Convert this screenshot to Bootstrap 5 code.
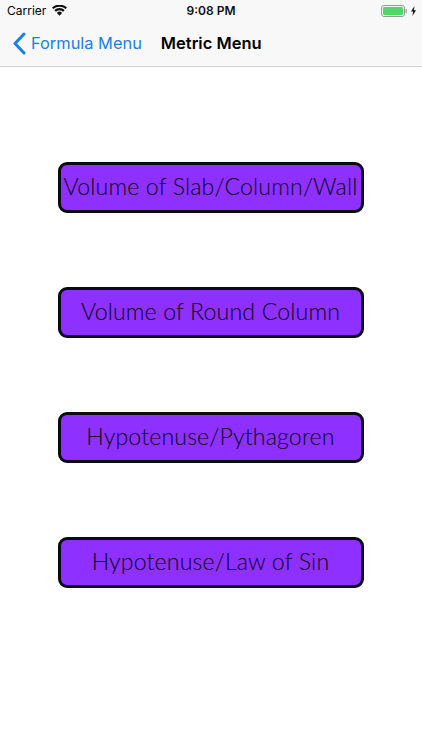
<!DOCTYPE html>
<html lang="en">
<head>
<meta charset="utf-8">
<title>Metric Menu</title>
<link href="https://cdn.jsdelivr.net/npm/bootstrap@5.3.0/dist/css/bootstrap.min.css" rel="stylesheet">
<style>
html,body{height:750px;overflow:hidden;background:#fff}
body{font-family:Inter,"Liberation Sans",Arial,sans-serif;color:#000}
.topbars{background:#f8f8f8;border-bottom:1px solid #d6d6d8;height:67px}
.statusline{height:20px;padding:1px 5px 0 7px;font-size:12px;line-height:20px}
.statusline .clock{left:0;right:0;top:1px;text-align:center;font-weight:600;font-size:12px;color:#111}
.wifi-ico{margin-left:6px}
.navline{height:46px;padding-left:12px}
.backtxt{color:#1a7fe8;font-size:16.4px;margin-left:5px;white-space:nowrap}
.navttl{font-size:16.5px;font-weight:600;margin-left:19px;white-space:nowrap}
.menu-stack{padding-top:95px;gap:74px}
.menu-btn{width:306px;height:51px;background:#8e30ff;border:3px solid #0a0a12;border-radius:9px;font-family:Lato,"Liberation Sans",sans-serif;font-size:23.2px;font-weight:300;letter-spacing:.12px;color:#0c0420;padding:0 0 2px;white-space:nowrap;line-height:1;margin-left:-1px}
.menu-btn:hover,.menu-btn:active{background:#8e30ff;border-color:#0a0a12;color:#0c0420}
</style>
</head>
<body>
<header class="topbars">
  <div class="statusline d-flex align-items-center position-relative">
    <span>Carrier</span>
    <svg class="wifi-ico" width="15" height="11" viewBox="0 0 15 11" aria-hidden="true"><path d="M7.5 10.8 4.9 7.9a3.7 3.7 0 0 1 5.2 0zM3.9 6.8 2.3 5.1a7.3 7.3 0 0 1 10.4 0l-1.6 1.7a5 5 0 0 0-7.2 0zM1.4 4.1 0 2.6a10.8 10.8 0 0 1 15 0l-1.4 1.5a8.8 8.8 0 0 0-12.2 0z" fill="#111"/></svg>
    <span class="clock position-absolute">9:08 PM</span>
    <svg class="ms-auto" width="36" height="12" viewBox="0 0 36 12" aria-hidden="true">
      <rect x=".5" y=".5" width="23" height="11" rx="2.5" fill="none" stroke="#9a9a9a"/>
      <rect x="2" y="2" width="20" height="8" rx="1.2" fill="#4cd964"/>
      <rect x="24.5" y="4" width="1.3" height="4" fill="#9a9a9a"/>
      <path d="M33.5 1 30 6.6h2.2L31.4 11l3.6-5.8h-2.2z" fill="#111"/>
    </svg>
  </div>
  <nav class="navline d-flex align-items-center">
    <svg width="14" height="23" viewBox="0 0 14 23" aria-hidden="true"><path d="M12 2 3 11.5l9 9.5" fill="none" stroke="#1a7fe8" stroke-width="3" stroke-linecap="round" stroke-linejoin="round"/></svg>
    <span class="backtxt">Formula Menu</span>
    <span class="navttl">Metric Menu</span>
  </nav>
</header>
<main class="menu-stack d-flex flex-column align-items-center">
  <button type="button" class="btn menu-btn">Volume of Slab/Column/Wall</button>
  <button type="button" class="btn menu-btn">Volume of Round Column</button>
  <button type="button" class="btn menu-btn">Hypotenuse/Pythagoren</button>
  <button type="button" class="btn menu-btn">Hypotenuse/Law of Sin</button>
</main>
<script src="https://cdn.jsdelivr.net/npm/bootstrap@5.3.0/dist/js/bootstrap.bundle.min.js"></script>
</body>
</html>
